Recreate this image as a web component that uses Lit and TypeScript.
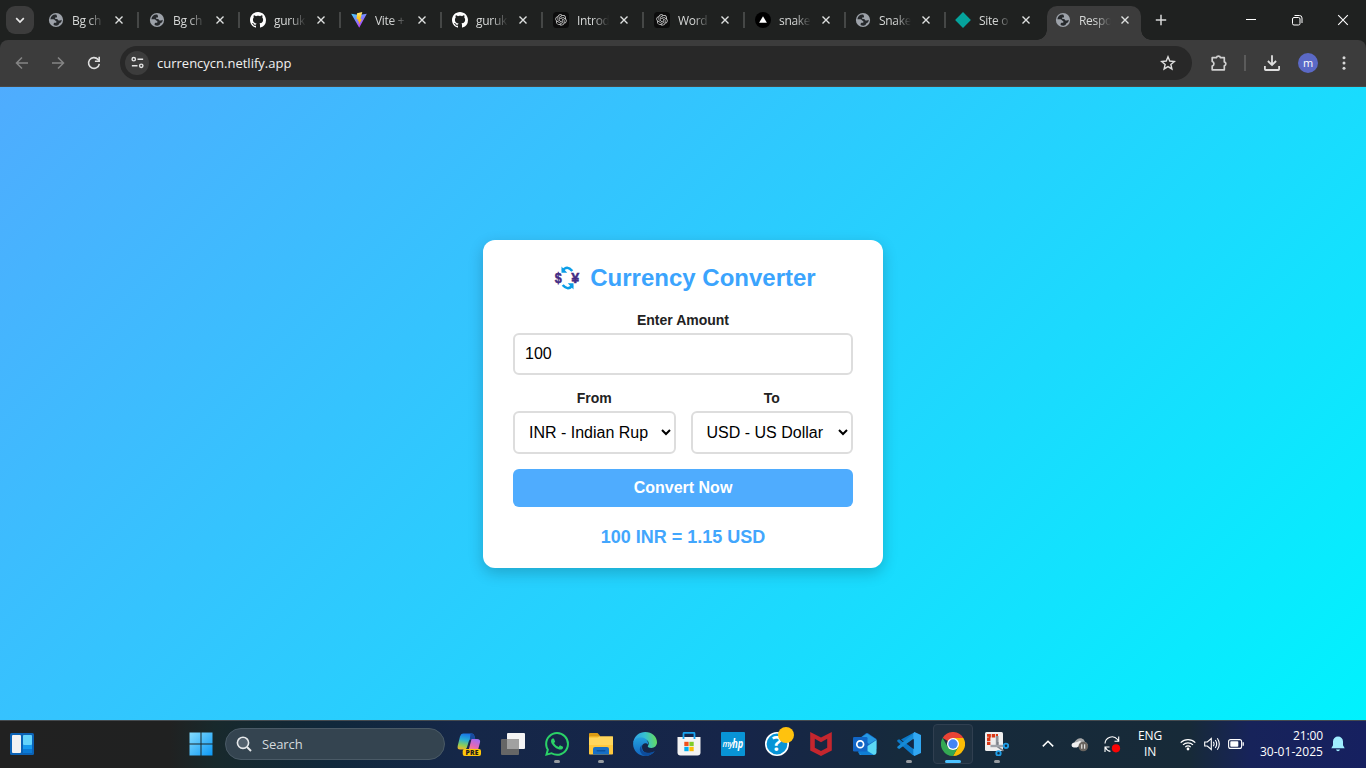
import { LitElement, html, svg, css } from "lit";
import { customElement, property } from "lit/decorators.js";

const GITHUB = "M8 0C3.58 0 0 3.58 0 8c0 3.54 2.29 6.53 5.47 7.59.4.07.55-.17.55-.38 0-.19-.01-.82-.01-1.49-2.01.37-2.53-.49-2.69-.94-.09-.23-.48-.94-.82-1.13-.28-.15-.68-.52-.01-.53.63-.01 1.08.58 1.23.82.72 1.21 1.87.87 2.33.66.07-.52.28-.87.51-1.07-1.78-.2-3.64-.89-3.64-3.95 0-.87.31-1.59.82-2.15-.08-.2-.36-1.02.08-2.12 0 0 .67-.21 2.2.82.64-.18 1.32-.27 2-.27s1.36.09 2 .27c1.53-1.04 2.2-.82 2.2-.82.44 1.1.16 1.92.08 2.12.51.56.82 1.27.82 2.15 0 3.07-1.87 3.75-3.65 3.95.29.25.54.73.54 1.48 0 1.07-.01 1.93-.01 2.2 0 .21.15.46.55.38A8.01 8.01 0 0 0 16 8c0-4.42-3.58-8-8-8z";
const OPENAI = "M22.28 9.82a5.98 5.98 0 0 0-.52-4.91 6.05 6.05 0 0 0-6.51-2.9A6.07 6.07 0 0 0 4.98 4.18a5.98 5.98 0 0 0-4 2.9 6.05 6.05 0 0 0 .74 7.1 5.98 5.98 0 0 0 .51 4.91 6.05 6.05 0 0 0 6.52 2.9A5.98 5.98 0 0 0 13.26 24a6.06 6.06 0 0 0 5.77-4.21 5.99 5.99 0 0 0 4-2.9 6.06 6.06 0 0 0-.75-7.07zm-9.02 12.61a4.48 4.48 0 0 1-2.88-1.04l.14-.08 4.78-2.76a.8.8 0 0 0 .39-.68v-6.74l2.02 1.17a.07.07 0 0 1 .04.05v5.58a4.5 4.5 0 0 1-4.49 4.5zM3.6 18.3a4.47 4.47 0 0 1-.54-3.01l.14.09 4.78 2.76a.77.77 0 0 0 .78 0l5.84-3.37v2.33a.08.08 0 0 1-.03.06L9.74 19.95a4.5 4.5 0 0 1-6.14-1.65zM2.34 7.9a4.49 4.49 0 0 1 2.37-1.98v5.68a.77.77 0 0 0 .39.68l5.81 3.35-2.02 1.17a.08.08 0 0 1-.07 0l-4.83-2.79A4.5 4.5 0 0 1 2.34 7.87zm16.6 3.86L13.1 8.36 15.12 7.2a.08.08 0 0 1 .07 0l4.83 2.79a4.49 4.49 0 0 1-.68 8.1v-5.68a.79.79 0 0 0-.4-.65zm2.01-3.02-.14-.09-4.77-2.78a.78.78 0 0 0-.79 0L9.41 9.23V6.9a.07.07 0 0 1 .03-.06l4.83-2.79a4.5 4.5 0 0 1 6.68 4.66zM8.31 12.86l-2.02-1.16a.08.08 0 0 1-.04-.06V6.07a4.5 4.5 0 0 1 7.38-3.45l-.14.08L8.7 5.46a.8.8 0 0 0-.39.68zm1.1-2.37 2.6-1.5 2.61 1.5v3l-2.6 1.5-2.61-1.5z";
const WHATSAPP = "M17.47 14.38c-.3-.15-1.76-.87-2.03-.97-.27-.1-.47-.15-.67.15-.2.3-.77.97-.94 1.16-.17.2-.35.22-.64.08-.3-.15-1.26-.46-2.39-1.48-.88-.79-1.48-1.76-1.65-2.06-.17-.3-.02-.46.13-.6.13-.14.3-.35.45-.52.15-.17.2-.3.3-.5.1-.2.05-.37-.03-.52-.07-.15-.67-1.61-.91-2.2-.24-.58-.49-.5-.67-.51-.17-.01-.37-.01-.57-.01-.2 0-.52.07-.79.37-.27.3-1.04 1.02-1.04 2.48s1.06 2.88 1.21 3.07c.15.2 2.1 3.2 5.08 4.49.71.3 1.26.49 1.69.62.71.23 1.36.2 1.87.12.57-.09 1.76-.72 2.01-1.41.25-.7.25-1.29.17-1.41-.07-.13-.27-.2-.57-.35m-5.42 7.4h-.01a9.87 9.87 0 0 1-5.03-1.38l-.36-.21-3.74.98 1-3.65-.24-.37a9.86 9.86 0 0 1-1.51-5.26c0-5.45 4.44-9.88 9.89-9.88a9.83 9.83 0 0 1 9.88 9.89c0 5.45-4.44 9.88-9.88 9.88m8.41-18.3A11.82 11.82 0 0 0 12.05 0C5.5 0 .16 5.34.16 11.89c0 2.1.55 4.14 1.59 5.95L.06 24l6.3-1.65a11.88 11.88 0 0 0 5.68 1.45c6.56 0 11.9-5.34 11.9-11.9a11.82 11.82 0 0 0-3.48-8.41z";

const glyphs: Record<string, [string, unknown]> = {
  globe: ["0 0 16 16", svg`<circle cx="8" cy="8" r="7.1" fill="#9da2a9"/><path fill="#26292c" d="M8.2 2.6C5 2.3 2.8 4.3 2.4 7.2l2.9.1c1.7.1 1.6 1.7 3 1.8v1.7H6.500c-.7.1-.9.8-.9 2.300C8.500 14.300 11 13.500 11.400 11.200c1.700-.2 2.300-1.700 2.300-3.500-.9 0-1.200.9-2.300.9-1.600 0-1.200-1.600-2.600-1.700H7.200V5.600h1.300c.9-.1.6-1.700-.3-3z"/>`],
  github: ["0 0 16 16", svg`<path fill="#fff" d=${GITHUB}/>`],
  vite: ["0 0 16 16", svg`<defs><linearGradient id="v" x1="0" y1="0" x2=".6" y2="1"><stop offset="0" stop-color="#41d1ff"/><stop offset="1" stop-color="#bd34fe"/></linearGradient><linearGradient id="y" x1="0" y1="0" x2="0" y2="1"><stop offset="0" stop-color="#ffea83"/><stop offset=".4" stop-color="#ffcd20"/><stop offset="1" stop-color="#ffa800"/></linearGradient></defs><path fill="url(#v)" d="M.2 1.800 8 3.100l7.800-1.300L8.200 15.800z"/><path fill="url(#y)" d="M11.300.1 6 1.200l-.4 6.200 1.700-.3-.5 2.500 1.500-.4-.8 3.900 3.700-6-1.900.3 1-3.600z"/>`],
  openai: ["0 0 16 16", svg`<rect width="16" height="16" rx="3.500" fill="#0c0c0c"/><g transform="translate(2.300 2.200) scale(.475)"><path fill="#d5d5d5" d=${OPENAI}/></g>`],
  vercel: ["0 0 16 16", svg`<circle cx="8" cy="8" r="8" fill="#000"/><path fill="#fff" d="M8 4.200l3.900 6.600H4.100z"/>`],
  diamond: ["0 0 16 16", svg`<path fill="#05a39c" d="M8 .1 15.900 8 8 15.900.1 8z"/>`],
  x: ["0 0 16 16", svg`<path d="M4.500 4.500l7 7m0-7l-7 7" stroke="#dfe1e0" stroke-width="1.400"/>`],
  down: ["0 0 16 16", svg`<path d="M4.200 6.200 8 10l3.800-3.800" fill="none" stroke="#e8e8e8" stroke-width="1.700"/>`],
  plus: ["0 0 16 16", svg`<path d="M8 2.800v10.400M2.800 8h10.400" stroke="#d8d8d8" stroke-width="1.500"/>`],
  min: ["0 0 16 16", svg`<path d="M3 7.500h10" stroke="#fff"/>`],
  max: ["0 0 16 16", svg`<rect x="3.500" y="5.500" width="7.500" height="7.500" rx="1.500" fill="none" stroke="#fff"/><path d="M5.500 3.500H10.500a2.500 2.500 0 0 1 2.500 2.500v5" fill="none" stroke="#fff"/>`],
  exit: ["0 0 16 16", svg`<path d="M3.200 3.200l9.600 9.600m0-9.600l-9.600 9.600" stroke="#fff" stroke-width="1.100"/>`],
  back: ["0 0 16 16", svg`<path d="M14 8H2.800M8 2.500 2.500 8 8 13.500" fill="none" stroke="#858585" stroke-width="1.500"/>`],
  fwd: ["0 0 16 16", svg`<path d="M2 8h11.200M8 2.500 13.500 8 8 13.500" fill="none" stroke="#858585" stroke-width="1.500"/>`],
  reload: ["0 0 16 16", svg`<path d="M13.300 8.800A5.400 5.400 0 1 1 12 4.400l1 1.100" fill="none" stroke="#dedede" stroke-width="1.600"/><path fill="#dedede" d="M14 1.800v5.200H8.900V5.500h3.500V1.800z"/>`],
  tune: ["0 0 16 16", svg`<g fill="none" stroke="#e3e3e3" stroke-width="1.500"><circle cx="4" cy="4.500" r="1.800"/><path d="M8 4.500h6M2 11.500h6"/><circle cx="12" cy="11.500" r="1.800"/></g>`],
  star: ["0 0 16 16", svg`<path d="M8 1.800l1.750 4.250 4.600.4-3.500 3 1.050 4.500L8 11.550 4.100 13.950l1.050-4.500-3.500-3 4.600-.4z" fill="none" stroke="#dedede" stroke-width="1.400"/>`],
  puzzle: ["0 0 18 18", svg`<path d="M2.200 3.700H6.400a2.100 2.100 0 0 1 4.100 0h3.800v4.200a2 2 0 0 1 0 3.900v4H2.200v-3.700a2.400 2.400 0 0 0 0-4.600z" fill="none" stroke="#d0d0d0" stroke-width="1.700" stroke-linejoin="round"/>`],
  download: ["0 0 18 18", svg`<path d="M9 1.200v9.600M4.900 7 9 11l4.100-4M1.900 12v3.200q0 .8.800.8h12.600q.8 0 .8-.8V12" fill="none" stroke="#dedede" stroke-width="1.800"/>`],
  dots: ["0 0 16 16", svg`<g fill="#d8d8d8"><circle cx="8" cy="2.700" r="1.500"/><circle cx="8" cy="8" r="1.500"/><circle cx="8" cy="13.300" r="1.500"/></g>`],
  exchange: ["-4 0 30 26", svg`<g fill="none" stroke="#0b9ee8" stroke-width="2.600"><path d="M8.500 5.800Q13-.3 18.300 6"/><path d="M18.500 20.200Q14 26.300 8.700 20"/></g><path fill="#0b9ee8" d="M7.500 1.500v6.200h5.700zM19.500 24.500v-6.200h-5.700z"/><g font-family="Liberation Sans" fill="#432c84" stroke="#432c84" stroke-width=".5" text-anchor="middle"><text x="4.300" y="18.200" font-size="15.500" textLength="7" lengthAdjust="spacingAndGlyphs">$</text><text x="21.300" y="18.300" font-size="14.500" textLength="8" lengthAdjust="spacingAndGlyphs">¥</text></g>`],
  widgets: ["0 0 24 24", svg`<rect y="1" width="24" height="22" rx="1.500" fill="#0b62b5"/><rect x="2" y="3" width="9" height="18" rx="1" fill="#f2f2f2"/><rect x="13" y="3" width="9" height="10" rx=".8" fill="#63d3fb"/><rect x="13" y="13" width="9" height="4" fill="#1599ee"/><rect x="13" y="17" width="9" height="4" fill="#0a7ad6"/>`],
  start: ["0 0 24 24", svg`<defs><linearGradient id="w" x1="0" y1="0" x2="1" y2="1" ><stop stop-color="#86dcfd"/><stop offset="1" stop-color="#0b98f5"/></linearGradient></defs><path fill="url(#w)" d="M.5.500h11v11H.500zM12.500.500h11v11h-11zM.5 12.500h11v11H.500zM12.500 12.500h11v11h-11z"/>`],
  search: ["0 0 16 16", svg`<circle cx="7" cy="6.800" r="5.600" fill="#53616d" stroke="#e6e9eb" stroke-width="1.600"/><path d="M11 11l4 4" stroke="#e6e9eb" stroke-width="1.900"/>`],
  copilot: ["0 0 24 24", svg`<defs><linearGradient id="c1" x1=".5" y1="0" x2=".3" y2="1"><stop stop-color="#1974e8"/><stop offset=".4" stop-color="#27afd5"/><stop offset=".75" stop-color="#8ccc58"/><stop offset="1" stop-color="#f0b72c"/></linearGradient><linearGradient id="c2" x1=".7" y1="0" x2=".3" y2="1"><stop stop-color="#a26cf2"/><stop offset=".5" stop-color="#e368b5"/><stop offset="1" stop-color="#ff9c5c"/></linearGradient></defs><path fill="url(#c1)" d="M6 1.500h8.500q2.500 0 3 3l.7 2.500h-3.700q-2 0-2.600 2l-2 6.600q-.6 1.900-2.600 1.900H3q-3 0-2.300-3.500L3 4.500q.8-3 3-3z"/><path fill="#194b9e" d="M13.500 1.500h1.500q2 0 2.600 3l.7 2.500h-3.500q-1.500 0-2.100 1.500z"/><path fill="url(#c2)" d="M14.500 7H20q3.800 0 3 3.500L21 18q-.7 2.700-3 2.700H9q2 0 2.500-2L14 9z"/><rect x="5.700" y="17" width="18.300" height="7" rx="2" fill="#ffc60a"/><text x="14.900" y="23" font-family="Open Sans" font-weight="800" font-size="6.800" text-anchor="middle" textLength="13" fill="#1c1c1c">PRE</text>`],
  taskview: ["0 0 24 24", svg`<rect x="6" y="1" width="18" height="16" rx="1" fill="#f4f4f4"/><rect x="0" y="7" width="18" height="16" rx="1" fill="#666"/><path fill="#a1a1a1" d="M6 7h12v10H6z"/>`],
  whatsapp: ["0 0 24 24", svg`<path fill="#2bd167" d=${WHATSAPP}/>`],
  folder: ["0 0 24 24", svg`<path fill="#dc9b13" d="M0 2q0-1 1-1h7.500L11 3.800V7H0z"/><rect y="4.500" width="24" height="18" rx=".8" fill="#ffc83d"/><path fill="#ffd65c" d="M0 8V6h8.500l2-1.500H24V13H0z"/><path fill="#176fc5" d="M4 22.500v-5.500q0-2 2-2h12q2 0 2 2v5.500z"/><rect x="7.500" y="18" width="9" height="1.600" rx=".8" fill="#0b529f"/>`],
  edge: ["0 0 24 24", svg`<defs><linearGradient id="e1" x1="0" y1=".3" x2="1" y2=".2"><stop stop-color="#2f9fe8"/><stop offset=".5" stop-color="#36c1d0"/><stop offset="1" stop-color="#69dd55"/></linearGradient><linearGradient id="e2" x1="0" y1="0" x2="0" y2="1"><stop stop-color="#23a0de"/><stop offset="1" stop-color="#1265c0"/></linearGradient></defs><path fill="url(#e1)" d="M.2 10.500C1.300 4 6.300 0 12.300 0 19 0 24 4.800 24 10.200c0 3.500-2.600 5.700-5.500 5.700-3 0-4.400-1.200-3.500-2.200 2-2.600 0-6.700-5-6.700-4.200 0-7.500 1.200-9.800 3.500z"/><path fill="url(#e2)" d="M.1 12C0 7.500 4.500 5 9 5.500c4 .5 6.500 3.500 6 7-1.800-2.300-6-1.500-6 2.500 0 5.800 6 8.200 12.700 4.200C19.500 22.200 16 24 12 24 5.500 24 .1 18.500.1 12z"/><path fill="#0d4c9c" d="M9.200 13c-2.400 4.700 1.600 10.500 12.500 6.200C20 21.600 16 24 12 24 7.500 23 4.500 16 9.200 13z"/>`],
  store: ["0 0 24 24", svg`<path d="M6.500 6.500V1.800q0-1 1-1h9q1 0 1 1v4.700" fill="none" stroke="#18a4ef" stroke-width="1.800"/><path fill="#f3f3f3" d="M.5 5h23v15.500q0 3-3 3h-17q-3 0-3-3z"/><path fill="#18a4ef" d="M5.600 5h1.800v2H5.600zM16.600 5h1.800v2h-1.800z"/><path fill="#f1511b" d="M7.300 9.800h4.300v4.300H7.300z"/><path fill="#80cc28" d="M12.400 9.800h4.300v4.300h-4.300z"/><path fill="#00adef" d="M7.300 14.900h4.300v4.300H7.300z"/><path fill="#fbbc09" d="M12.400 14.900h4.300v4.300h-4.300z"/>`],
  myhp: ["0 0 24 24", svg`<rect width="24" height="24" rx="1" fill="#0894d6"/><g font-family="Open Sans" font-style="italic" fill="#fff"><text x="1.500" y="14.500" font-size="8" font-weight="600" textLength="10.500">my</text><text x="11.300" y="15.700" font-size="11.500" font-weight="700" textLength="11" lengthAdjust="spacingAndGlyphs">hp</text></g>`],
  help: ["0 0 30 30", svg`<circle cx="13" cy="17" r="11.200" fill="#0894d6" stroke="#fff" stroke-width="1.600"/><text x="13" y="24.300" text-anchor="middle" fill="#fff" font-family="Open Sans" font-weight="700" font-size="21">?</text><circle cx="22" cy="8" r="8" fill="#ffc20e"/>`],
  mcafee: ["0 0 24 24", svg`<path fill="#c4262e" d="M1.200 0 12 5.500 22.800 0v18.500L12 24 1.200 18.500zM5.800 6.800v9L12 19l6.200-3.200v-9L12 10.200z"/>`],
  outlook: ["0 0 24 24", svg`<path fill="#1568be" d="M5 7.500 13 1.200q1-.6 2 0L23.500 7v10H5z"/><path fill="#2699e3" d="M8 5.500 14 1.500l9.500 6L16 12z"/><path fill="#5bd8f5" d="M23.500 8v12q0 3-3 3H7l-1.500-3z"/><path fill="#0f7ed5" d="M5.500 13.500 21 23H8.500q-3 0-3-3z"/><rect y="5" width="14.500" height="14.500" rx="1.300" fill="#1166c7"/><circle cx="7.200" cy="12.200" r="3.400" fill="none" stroke="#fff" stroke-width="1.700"/>`],
  vscode: ["0 0 24 24", svg`<path fill="#0b79c9" d="M18 0 6.800 10.700 2.200 7.200.3 8v1.500L15.500 23l2.500 1v-6L4 7.500z"/><path fill="#168bd6" d="M.3 16 2.200 17 18 5.800V0L.3 14.700z"/><path fill="#31a7f2" d="M17.500 0 24 3v18l-6.500 3-1.200-1.500V1.500z"/><path fill="#132747" d="M16.800 7v10l-6.500-5z"/>`],
  chrome: ["0 0 24 24", svg`<path fill="#e94335" d="M12 12 1.600 6a12 12 0 0 1 20.800 0H12z"/><path fill="#fbbc05" d="M12 12V6h10.400A12 12 0 0 1 12 24l5.200-9z"/><path fill="#34a853" d="M12 12l5.200 3L12 24A12 12 0 0 1 1.600 6l5.200 9z"/><circle cx="12" cy="12" r="6" fill="#fff"/><circle cx="12" cy="12" r="4.700" fill="#4285f4"/>`],
  snip: ["0 0 24 24", svg`<rect width="18" height="19" rx="1.500" fill="#efefef"/><path d="M3.700 13V3.700H13" fill="none" stroke="#d93715" stroke-width="3.400" stroke-dasharray="3.300 .8"/><path fill="#8d9299" d="M10.800 4h2.700v11h-2.700z"/><path fill="#7b8088" d="M12 10h1.500v4.500l5.500 3.500-1 1.500-6-4.300z"/><path fill="#9da2a9" d="M5.500 12.800h13v2.400H5.500z"/><g fill="none" stroke="#209de6" stroke-width="1.900"><circle cx="21" cy="13.800" r="2.200"/><circle cx="13.500" cy="21.300" r="2.200"/></g>`],
  up: ["0 0 16 16", svg`<path d="M2.800 10.400 8 5.200l5.200 5.200" fill="none" stroke="#fff" stroke-width="1.500"/>`],
  cloud: ["0 0 18 16", svg`<path fill="#a8a9aa" d="M5 11a4.200 4.200 0 0 1 .3-7 5 5 0 0 1 8.700 2q2.500.4 3 4z"/><path fill="#f0f0f0" d="M2.800 11.500q-2.300-.3-2.300-2.400 0-2 2.500-2.500 3.500.1 6-1.800l2 2-5 4.700z"/><circle cx="12.300" cy="10.500" r="4.800" fill="#69645f"/><path d="M10.800 8.300v4.400M13.700 8.300v4.400" stroke="#fff" stroke-width="1"/>`],
  sync: ["0 0 18 18", svg`<path d="M2 8.500A7 7 0 0 1 14.500 4.500l1.200 1.700M15.700 1.500v4.700h-4.200M2 17v-5h4.500M2.200 12.200q1.700 3.500 5.200 4.200" fill="none" stroke="#fff" stroke-width="1.100"/><circle cx="13" cy="13.300" r="4.100" fill="#fb0505"/>`],
  wifi: ["0 0 16 16", svg`<g fill="none" stroke="#fff" stroke-width="1.200"><path d="M.7 6.600a10.300 10.300 0 0 1 14.600 0M3 8.900a7 7 0 0 1 10 0M5.300 11.100a3.800 3.800 0 0 1 5.400 0"/></g><circle cx="8" cy="13" r="1.400" fill="#fff"/>`],
  speaker: ["0 0 16 16", svg`<path d="M.7 6v4h2.600L7.300 13.500v-11L3.300 6zM9.300 5.700q1.500 2.300 0 4.600M11.300 4q2.800 4 0 8M13.300 2.300q4 5.700 0 11.400" fill="none" stroke="#fff" stroke-width="1.100"/>`],
  battery: ["0 0 16 16", svg`<rect x=".6" y="3.600" width="13" height="8.800" rx="2" fill="none" stroke="#fff" stroke-width="1.100"/><rect x="2.300" y="5.300" width="8" height="5.400" rx=".8" fill="#fff"/><path d="M15.200 6.300v3.400" stroke="#fff" stroke-width="1.300"/>`],
  bell: ["0 0 16 16", svg`<path fill="#a0edff" d="M8 .6a5 5 0 0 1 5 5v3.600l1.700 3H1.300l1.700-3V5.600a5 5 0 0 1 5-5zM6 13.500h4q-.5 1.700-2 1.700t-2-1.700z"/>`],
};

@customElement("ui-glyph")
class UiGlyph extends LitElement {
  @property() name = "";
  static styles = css`
    :host { display: block; width: 16px; height: 16px; flex: none; }
    svg { display: block; width: 100%; height: 100%; }
  `;
  render() {
    const [box, art] = glyphs[this.name];
    return html`<svg viewBox=${box}>${art}</svg>`;
  }
}

const tabs: [string, string][] = [
  ["globe", "Bg ch"], ["globe", "Bg ch"], ["github", "guruk"], ["vite", "Vite +"], ["github", "guruk"],
  ["openai", "Introd"], ["openai", "Word"], ["vercel", "snake"], ["globe", "Snake"], ["diamond", "Site o"], ["globe", "Respo"],
];

@customElement("browser-chrome")
class BrowserChrome extends LitElement {
  static styles = css`
    :host { display: block; height: 87px; color: #dfe1e0; font-family: "Open Sans", "Noto Sans", sans-serif; background: #1f2120; }
    .strip { display: flex; height: 40px; align-items: center; padding-left: 6px; box-sizing: border-box; }
    .drop { display: grid; place-items: center; width: 28px; height: 28px; border-radius: 9px; background: #3c3c3c; margin-right: 6px; }
    .tab { display: flex; align-items: center; align-self: flex-end; box-sizing: border-box; width: 101px; height: 34px; padding: 0 0 6px 8px; flex: none; }
    .tab.narrow { width: 100px; }
    .name { width: 32px; overflow: hidden; margin-left: 8px; white-space: nowrap; font-size: 12px; letter-spacing: -.3px; line-height: 18px; padding-top: 1px; color: #d6d8d7; mask-image: linear-gradient(90deg, #000 50%, transparent 100%); }
    .close { margin-left: 7px; }
    .rule { width: 2px; height: 16px; background: #454746; margin-left: 10px; }
    .tab.active { position: relative; width: 94px; background: #3c3c3c; border-radius: 10px 10px 0 0; }
    .active .close { margin-left: 6px; }
    .active::before, .active::after { content: ""; position: absolute; bottom: 0; width: 10px; height: 10px; }
    .active::before { left: -10px; background: radial-gradient(circle at 0 0, transparent 9.5px, #3c3c3c 10px); }
    .active::after { right: -10px; background: radial-gradient(circle at 100% 0, transparent 9.5px, #3c3c3c 10px); }
    .add { margin-left: 12px; }
    .controls { display: flex; gap: 30px; margin-left: auto; padding-right: 15px; }
    .bar { display: flex; align-items: center; height: 47px; box-sizing: border-box; padding: 0 14px 1px; background: #3c3c3c; border-radius: 8px 8px 0 0; border-bottom: 1px solid #4a4744; }
    .nav { display: flex; gap: 20px; }
    .address { display: flex; align-items: center; width: 1072px; height: 34px; box-sizing: border-box; padding: 0 16px 0 5px; margin-left: 18px; border-radius: 17px; background: #282828; flex: none; }
    .site { display: grid; place-items: center; width: 24px; height: 24px; border-radius: 50%; background: #3c3c3c; }
    .site ui-glyph { width: 15px; height: 15px; }
    .url { margin-left: 8px; flex: 1; font-size: 13px; letter-spacing: 0; line-height: 20px; color: #f0f0f0; }
    .tools { display: flex; align-items: center; margin-left: 18px; }
    .tools ui-glyph { width: 18px; height: 18px; }
    .split { width: 2px; height: 16px; background: #5b5b5b; margin: 0 17px 0 16px; }
    .avatar { display: grid; place-items: center; width: 20px; height: 20px; margin: 0 18px 0 17px; border-radius: 50%; background: #5b69c6; color: #fff; font-size: 11px; line-height: 18px; padding-bottom: 0; }
    .tools .more { width: 16px; height: 16px; }
  `;
  render() {
    return html`
      <div class="strip">
        <div class="drop"><ui-glyph name="down"></ui-glyph></div>
        ${tabs.map(([icon, name], i) => html`
          <div class="tab ${i === tabs.length - 1 ? "active" : i > 6 ? "narrow" : ""}">
            <ui-glyph name=${icon}></ui-glyph><span class="name">${name}</span><ui-glyph class="close" name="x"></ui-glyph>
            ${i < tabs.length - 2 ? html`<i class="rule"></i>` : ""}
          </div>`)}
        <ui-glyph class="add" name="plus"></ui-glyph>
        <div class="controls"><ui-glyph name="min"></ui-glyph><ui-glyph name="max"></ui-glyph><ui-glyph name="exit"></ui-glyph></div>
      </div>
      <div class="bar">
        <div class="nav"><ui-glyph name="back"></ui-glyph><ui-glyph name="fwd"></ui-glyph><ui-glyph name="reload"></ui-glyph></div>
        <div class="address"><span class="site"><ui-glyph name="tune"></ui-glyph></span><span class="url">currencycn.netlify.app</span><ui-glyph name="star"></ui-glyph></div>
        <div class="tools"><ui-glyph name="puzzle"></ui-glyph><i class="split"></i><ui-glyph name="download"></ui-glyph><span class="avatar">m</span><ui-glyph class="more" name="dots"></ui-glyph></div>
      </div>`;
  }
}

@customElement("currency-converter")
class CurrencyConverter extends LitElement {
  static styles = css`
    :host { display: flex; align-items: center; justify-content: center; background: linear-gradient(135deg, #4facfe, #00f2fe); font-family: "Liberation Sans", Arial, sans-serif; }
    .card { width: 400px; height: 328px; box-sizing: border-box; margin-top: 1px; padding: 24px 30px; border-radius: 12px; background: #fff; text-align: center; box-shadow: 0 5px 15px rgba(0, 0, 0, .2); }
    .title { display: flex; align-items: center; justify-content: center; gap: 10px; margin: 0; height: 28px; font-size: 24px; line-height: 28px; color: #3ba4fd; }
    .title ui-glyph { width: 30px; height: 26px; }
    label { display: block; font-size: 14px; font-weight: 700; line-height: 16px; color: #222; margin-bottom: 5px; }
    .amount { margin-top: 20px; }
    input, select { display: block; width: 100%; box-sizing: border-box; border: 2px solid #ddd; border-radius: 6px; padding: 10px; background: #fff; color: #000; font: 16px "Liberation Sans", Arial, sans-serif; }
    input { height: 42px; }
    select { height: 43px; }
    .pair { display: grid; grid-template-columns: 1fr 1fr; gap: 15px; margin-top: 15px; }
    button { display: block; width: 100%; height: 38px; margin-top: 15px; border: 0; border-radius: 6px; background: #4facfe; color: #fff; font: 700 16px "Liberation Sans", Arial, sans-serif; }
    .result { margin-top: 20px; font-size: 18px; line-height: 21px; font-weight: 700; color: #42a6fd; }
  `;
  render() {
    return html`
      <div class="card">
        <h2 class="title"><ui-glyph name="exchange"></ui-glyph><span>Currency Converter</span></h2>
        <div class="amount"><label>Enter Amount</label><input type="text" .value=${"100"} /></div>
        <div class="pair">
          <div><label>From</label><select><option>INR - Indian Rupee</option></select></div>
          <div><label>To</label><select><option>USD - US Dollar</option></select></div>
        </div>
        <button>Convert Now</button>
        <div class="result">100 INR = 1.15 USD</div>
      </div>`;
  }
}

const apps: [string, string][] = [
  ["copilot", ""], ["taskview", ""], ["whatsapp", "open"], ["folder", "open"], ["edge", ""], ["store", ""], ["myhp", ""],
  ["help", "badged"], ["mcafee", ""], ["outlook", ""], ["vscode", "open"], ["chrome", "current"], ["snip", "open"],
];

@customElement("task-bar")
class TaskBar extends LitElement {
  static styles = css`
    :host { display: flex; align-items: center; height: 48px; box-sizing: border-box; border-top: 1px solid #454b50; padding: 0 0 1px 10px; color: #fff; font-family: "Open Sans", "Noto Sans", sans-serif;
      background: linear-gradient(90deg, #212121 0, #202121 170px, #18292c 215px, #10283b 330px, #152748 460px, #162549 740px, #162a3c 900px, #172a38 1190px, #17235a 1250px, #162060 1366px); }
    ui-glyph { width: 24px; height: 24px; }
    .launch { display: grid; place-items: center; width: 44px; height: 46px; margin-left: 145px; }
    .launch ui-glyph { margin-right: 1px; }
    .search { display: flex; align-items: center; gap: 10px; width: 220px; height: 32px; box-sizing: border-box; margin: 0 2px; padding-left: 10px; border: 1px solid #4a5a66; border-radius: 16px; background: #344450; color: #d5dade; font-size: 13px; letter-spacing: -.1px; }
    .search ui-glyph { width: 16px; height: 16px; }
    .app { position: relative; display: grid; place-items: center; width: 44px; height: 46px; }
    .badged ui-glyph { width: 30px; height: 30px; margin: -5px -4px 0 0; }
    .open::after, .current::after { content: ""; position: absolute; bottom: 4px; left: 19px; width: 6px; height: 3px; border-radius: 2px; background: #969ba1; }
    .current::after { left: 14px; width: 16px; background: #4cc2ff; }
    .current::before { content: ""; position: absolute; left: 2px; top: 3px; width: 38px; height: 38px; border: 1px solid #303f50; border-radius: 4px; background: #27374880; }
    .current ui-glyph { position: relative; }
    .tray { display: flex; align-items: center; margin-left: 21px; }
    .tray ui-glyph { width: 16px; height: 16px; }
    .tray .cloud { width: 18px; margin: 0 14px 0 15px; }
    .tray .sync { width: 18px; height: 18px; }
    .lang { width: 38px; margin: 0 10px 0 10px; text-align: center; font-size: 12px; line-height: 16px; letter-spacing: -.2px; padding-right: 1px; }
    .status { display: flex; gap: 8px; }
    .clock { width: 79px; text-align: right; font-size: 12px; line-height: 16px; letter-spacing: -.1px; white-space: nowrap; margin-right: 7px; }
    .date { letter-spacing: .05px; }
  `;
  render() {
    return html`
      <ui-glyph name="widgets"></ui-glyph>
      <div class="launch"><ui-glyph name="start"></ui-glyph></div>
      <div class="search"><ui-glyph name="search"></ui-glyph><span>Search</span></div>
      ${apps.map(([name, kind]) => html`<div class="app ${kind}"><ui-glyph name=${name}></ui-glyph></div>`)}
      <div class="tray">
        <ui-glyph name="up"></ui-glyph><ui-glyph class="cloud" name="cloud"></ui-glyph><ui-glyph class="sync" name="sync"></ui-glyph>
        <div class="lang">ENG<br />IN</div>
        <div class="status"><ui-glyph name="wifi"></ui-glyph><ui-glyph name="speaker"></ui-glyph><ui-glyph name="battery"></ui-glyph></div>
        <div class="clock">21:00<br /><span class="date">30-01-2025</span></div>
        <ui-glyph name="bell"></ui-glyph>
      </div>`;
  }
}

@customElement("app-root")
class AppRoot extends LitElement {
  static styles = css`
    :host { display: grid; grid-template-columns: minmax(0, 1fr); grid-template-rows: 87px 633px 48px; width: 1366px; height: 768px; overflow: hidden; }
  `;
  render() {
    return html`<browser-chrome></browser-chrome><currency-converter></currency-converter><task-bar></task-bar>`;
  }
}
